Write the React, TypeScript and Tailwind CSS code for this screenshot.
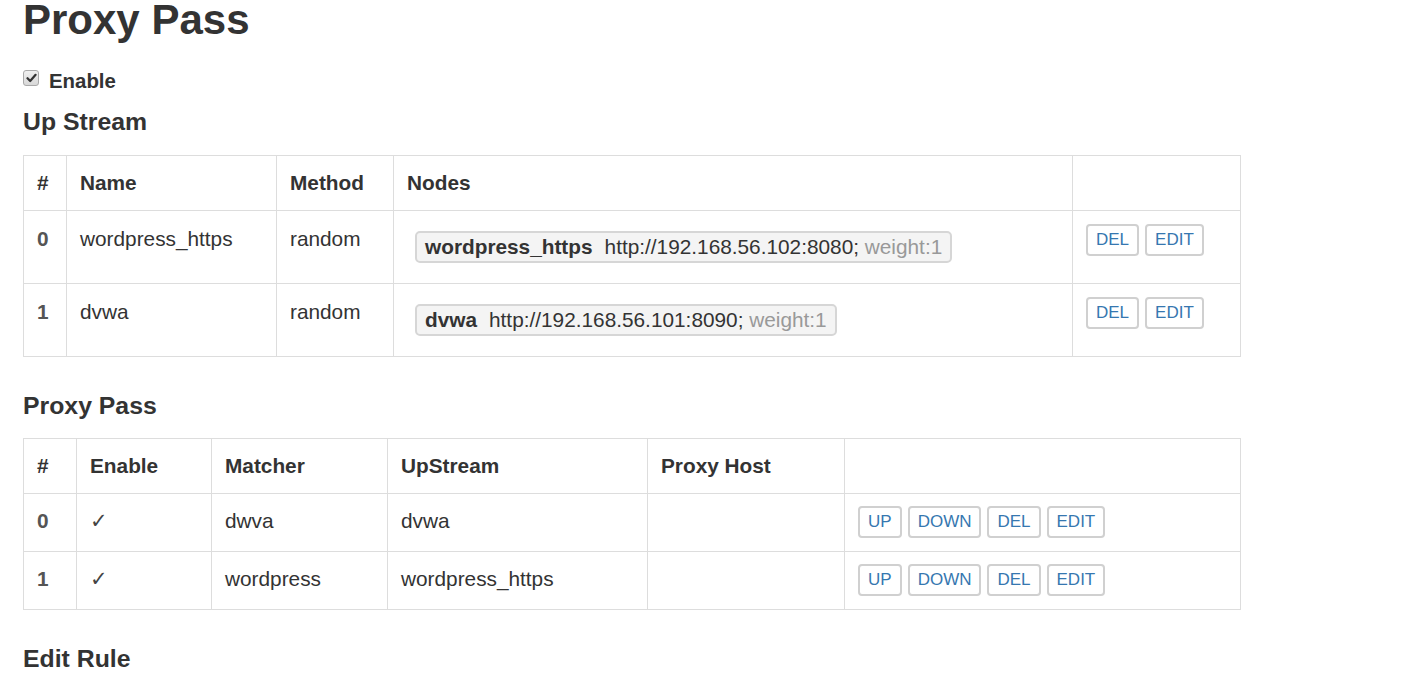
import React from "react";

const Btn = ({ label }: { label: string }) => (
  <span className="inline-block h-[32px] px-[8px] border-2 border-[#d0d0d0] rounded-[4px] bg-white text-[#3677b0] text-[17px] leading-[28px]">
    {label}
  </span>
);

const Badge = ({ name, url }: { name: string; url: string }) => (
  <span className="inline-block h-[32px] ml-[8px] my-[7px] px-[8px] border-2 border-[#d6d6d6] rounded-[5px] bg-[#f4f4f4] leading-[28px] whitespace-nowrap">
    <b className="font-bold mr-[12px]">{name}</b>
    <span>{url};</span> <span className="text-[#999]">weight:1</span>
  </span>
);

const th = "border border-[#dddddd] px-[13px] py-[12px] text-left font-bold align-top leading-[30px]";
const td1 = "border border-[#dddddd] px-[13px] py-[13px] align-top leading-[30px]";
const td2 = "border border-[#dddddd] px-[13px] pt-[12px] pb-[13px] align-top leading-[30px]";

export default function App() {
  const up = [
    { n: "wordpress_https", url: "http://192.168.56.102:8080" },
    { n: "dvwa", url: "http://192.168.56.101:8090" },
  ];
  const pp = [
    { m: "dwva", u: "dvwa" },
    { m: "wordpress", u: "wordpress_https" },
  ];
  return (
    <div className="min-h-screen bg-white text-[#333333] pl-[23px] text-[20.8px]" style={{ fontFamily: '"Liberation Sans", Arial, sans-serif' }}>
      <h1 className="text-[42px] leading-[38px] pt-[1px] font-bold">Proxy Pass</h1>
      <div className="mt-[27px] flex items-start h-[30px] leading-[30px]">
        <span className="mt-[4px] w-[16px] h-[16px] rounded-[3px] border border-[#a9a9a9] bg-gradient-to-b from-[#f0f0f0] to-[#d8d8d8] flex items-center justify-center">
          <svg width="11" height="10" viewBox="0 0 11 10">
            <path d="M1.5 5.2 L4.2 8 L9.6 1.8" fill="none" stroke="#333" strokeWidth="2.2" strokeLinecap="round" strokeLinejoin="round" />
          </svg>
        </span>
        <span className="ml-[10px] font-bold text-[20.4px]">Enable</span>
      </div>
      <h3 className="mt-[11px] text-[24.8px] leading-[30px] font-bold">Up Stream</h3>
      <table className="mt-[18px] w-[1217px] table-fixed border-collapse">
        <colgroup>
          <col className="w-[43px]" />
          <col className="w-[210px]" />
          <col className="w-[117px]" />
          <col className="w-[679px]" />
          <col className="w-[168px]" />
        </colgroup>
        <thead>
          <tr>
            <th className={th}>#</th>
            <th className={th}>Name</th>
            <th className={th}>Method</th>
            <th className={th}>Nodes</th>
            <th className={th}></th>
          </tr>
        </thead>
        <tbody>
          {up.map((r, i) => (
            <tr key={i}>
              <td className={td1 + " font-bold text-[#555]"}>{i}</td>
              <td className={td1}>{r.n}</td>
              <td className={td1}>random</td>
              <td className={"border border-[#dddddd] px-[13px] py-[13px] align-top"}>
                <div className="h-[46px]">
                  <Badge name={r.n} url={r.url} />
                </div>
              </td>
              <td className={td1}>
                <div className="flex gap-[6px]">
                  <Btn label="DEL" />
                  <Btn label="EDIT" />
                </div>
              </td>
            </tr>
          ))}
        </tbody>
      </table>
      <h3 className="mt-[34px] text-[24.8px] leading-[30px] font-bold">Proxy Pass</h3>
      <table className="mt-[17px] w-[1217px] table-fixed border-collapse">
        <colgroup>
          <col className="w-[53px]" />
          <col className="w-[135px]" />
          <col className="w-[176px]" />
          <col className="w-[260px]" />
          <col className="w-[197px]" />
          <col className="w-[396px]" />
        </colgroup>
        <thead>
          <tr>
            <th className={th}>#</th>
            <th className={th}>Enable</th>
            <th className={th}>Matcher</th>
            <th className={th}>UpStream</th>
            <th className={th}>Proxy Host</th>
            <th className={th}></th>
          </tr>
        </thead>
        <tbody>
          {pp.map((r, i) => (
            <tr key={i}>
              <td className={td2 + " font-bold text-[#555]"}>{i}</td>
              <td className={td2}><span className="font-light text-[#444]">✓</span></td>
              <td className={td2}>{r.m}</td>
              <td className={td2}>{r.u}</td>
              <td className={td2}></td>
              <td className={td2}>
                <div className="flex gap-[6px] h-[32px]">
                  <Btn label="UP" />
                  <Btn label="DOWN" />
                  <Btn label="DEL" />
                  <Btn label="EDIT" />
                </div>
              </td>
            </tr>
          ))}
        </tbody>
      </table>
      <h3 className="mt-[34px] text-[24.8px] leading-[30px] font-bold">Edit Rule</h3>
    </div>
  );
}
